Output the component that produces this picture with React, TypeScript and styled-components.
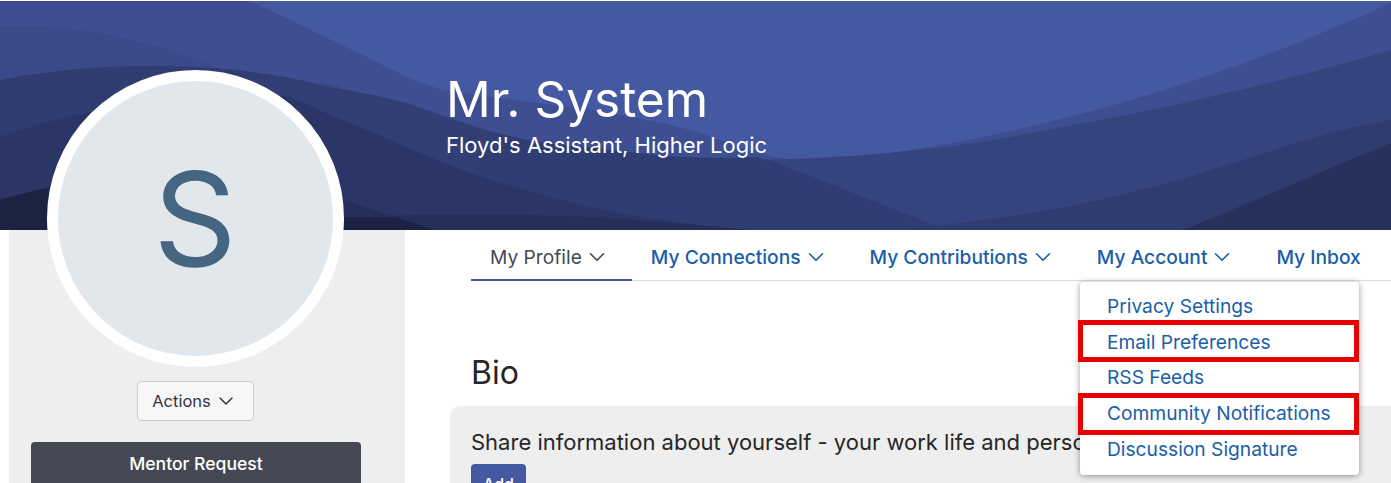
import React from 'react';
import styled, { createGlobalStyle } from 'styled-components';
import { ChevronDown } from 'lucide-react';

const Global = createGlobalStyle`
  html, body { margin: 0; padding: 0; height: 483px; overflow: hidden; background: #fff; }
  body { font-family: Inter, "Liberation Sans", sans-serif; }
  *, *::after { box-sizing: border-box; }
`;

const Banner = styled.header`
  position: relative;
  margin-top: 1px;
  height: 229px;
  padding: 68px 0 0 446px;
  background: #4558a2;
  overflow: hidden;
  color: #fff;
`;
const BannerArt = styled.svg`
  position: absolute;
  inset: 0;
  width: 100%;
  height: 100%;
`;
const Name = styled.h1`
  position: relative;
  margin: 0;
  font-size: 49.5px;
  line-height: 60px;
  font-weight: 400;
`;
const Role = styled.p`
  position: relative;
  margin: 1px 0 0;
  font-size: 22px;
  line-height: 30px;
`;
const Body = styled.div`
  display: flex;
  align-items: flex-start;
  height: 253px;
`;
const Sidebar = styled.aside`
  flex: none;
  display: flex;
  flex-direction: column;
  align-items: center;
  width: 396px;
  height: 100%;
  margin-left: 9px;
  padding: 0 45px 0 21px;
  background: #eeeeee;
`;
const Avatar = styled.div`
  position: relative;
  flex: none;
  display: flex;
  align-items: center;
  justify-content: center;
  width: 297px;
  height: 297px;
  margin-top: -160px;
  border: 11px solid #fff;
  border-radius: 50%;
  background: #e2e7eb;
  color: #446682;
  font-size: 130px;
  font-weight: 400;
`;
const ActionsButton = styled.button`
  flex: none;
  display: flex;
  align-items: center;
  justify-content: center;
  gap: 3px;
  width: 117px;
  height: 40px;
  margin-top: 14px;
  border: 1px solid #cccccc;
  border-radius: 4px;
  background: #f7f7f7;
  color: #33363f;
  font: 400 16.5px Inter, sans-serif;
`;
const MentorButton = styled.button`
  flex: none;
  align-self: flex-start;
  width: 330px;
  height: 44px;
  margin: 21px 0 0 1px;
  padding: 0 0 2px;
  border: 0;
  border-radius: 4px;
  background: #454854;
  color: #fff;
  font: 500 17.6px Inter, sans-serif;
`;
const Main = styled.main`
  flex: 1;
  min-width: 0;
  margin-left: 45px;
`;
const Nav = styled.nav`
  position: relative;
  display: flex;
  height: 51px;
  margin-left: 21px;
  border-bottom: 1px solid #dddddd;
`;
const Tab = styled.a<{ $active?: boolean }>`
  display: flex;
  align-items: center;
  gap: 2px;
  height: 51px;
  padding: 4px 19px 0;
  font-size: 19.2px;
  font-weight: ${(p) => (p.$active ? 400 : 500)};
  white-space: nowrap;
  color: ${(p) => (p.$active ? '#454854' : '#1a5ea8')};
  border-bottom: 2px solid ${(p) => (p.$active ? '#4558a2' : 'transparent')};
`;
const TabChevron = styled(ChevronDown)`
  margin-right: 3px;
`;
const Menu = styled.div`
  position: absolute;
  top: 52px;
  left: 609px;
  z-index: 3;
  width: 279px;
  padding: 6px 0 8px;
  border-radius: 4px;
  background: #fff;
  box-shadow: 0 1px 6px rgba(0, 0, 0, 0.4);
`;
const MenuItem = styled.a<{ $markTop?: number }>`
  position: relative;
  display: flex;
  align-items: center;
  height: 35.8px;
  padding-left: 27px;
  font-size: 19.2px;
  color: #1a5ea8;
  white-space: nowrap;
  ${(p) =>
    p.$markTop !== undefined &&
    `&::after {
      content: '';
      position: absolute;
      top: ${p.$markTop}px;
      left: -2px;
      right: 0;
      height: 42px;
      border: 5px solid #e60000;
    }`}
`;
const Heading = styled.h2`
  margin: 72px 0 0 21px;
  font-size: 32px;
  line-height: 40px;
  font-weight: 400;
  color: #262626;
`;
const Panel = styled.section`
  margin-top: 13px;
  padding: 21px 0 0 21px;
  height: 77px;
  overflow: hidden;
  border-radius: 10px 0 0 0;
  background: #eeeeee;
`;
const PanelText = styled.p`
  margin: 0;
  font-size: 22px;
  line-height: 30px;
  color: #262626;
  white-space: nowrap;
`;
const AddButton = styled.button`
  display: block;
  width: 55px;
  height: 40px;
  margin-top: 7px;
  border: 0;
  border-radius: 4px;
  background: #4558a2;
  color: #fff;
  font: 500 16px Inter, sans-serif;
`;

const tabChevron = <TabChevron size={26} strokeWidth={1.5} />;

export default function App() {
  return (
    <>
      <Global />
      <Banner>
        <BannerArt viewBox="0 1 1391 229" preserveAspectRatio="none" aria-hidden="true">
          <defs>
            <linearGradient id="band" x1="0" x2="1" y1="0" y2="0">
              <stop offset="0" stopColor="#303c70" />
              <stop offset="0.35" stopColor="#323f75" />
              <stop offset="0.55" stopColor="#35447f" />
              <stop offset="1" stopColor="#35447f" />
            </linearGradient>
          </defs>
          <path fill="#3e4e90" d="M248 0C290 20 335 42 373 60C395 72 420 83 443 90C470 95 500 98 530 102C565 107 600 110 630 117C655 121 675 126 697 132C730 142 755 155 800 161C950 155 1180 100 1391 3V230H0V0Z" />
          <path fill="#3a4a89" d="M0 27C70 22 150 40 214 67C250 78 295 83 340 85L340 120H0Z" />
          <path fill="url(#band)" d="M0 80C100 60 230 60 330 87C360 92 390 98 413 105C440 115 470 125 497 133C530 142 565 146 597 148C625 152 650 155 680 157C760 165 930 155 1040 131C1150 112 1270 85 1391 50V230H0Z" />
          <path fill="#303d73" d="M497 133C530 142 565 146 597 148C625 152 650 155 680 157C705 158 735 158 757 157C800 170 880 205 947 230H440Z" />
          <path fill="#2b3666" d="M0 137C70 110 200 90 280 95C300 100 315 108 330 115C355 125 380 135 397 143C420 153 440 162 463 170C495 182 530 192 563 200C600 210 635 216 663 220C690 224 720 228 750 230H0Z" />
          <path fill="#303c70" d="M1391 120C1300 135 1220 172 1140 190C1060 212 970 222 898 230H1391Z" />
          <path fill="#27315c" d="M1391 143C1320 172 1250 203 1182 230H1391Z" />
          <path fill="#252f59" d="M343 217C400 215 470 214 530 215C620 217 690 224 750 230H343Z" />
          <path fill="#252f59" d="M343 200L435 230H343Z" />
          <path fill="#1b2345" d="M343 217L396 217L435 230H343Z" />
          <path fill="#1b2345" d="M0 200C15 195 32 191 60 185V230H0Z" />
        </BannerArt>
        <Name>Mr. System</Name>
        <Role>Floyd's Assistant, Higher Logic</Role>
      </Banner>
      <Body>
        <Sidebar>
          <Avatar>S</Avatar>
          <ActionsButton>
            Actions <ChevronDown size={24} strokeWidth={1.5} />
          </ActionsButton>
          <MentorButton>Mentor Request</MentorButton>
        </Sidebar>
        <Main>
          <Nav>
            <Tab $active>My Profile {tabChevron}</Tab>
            <Tab>My Connections {tabChevron}</Tab>
            <Tab>My Contributions {tabChevron}</Tab>
            <Tab>My Account {tabChevron}</Tab>
            <Tab>My Inbox</Tab>
            <Menu>
              <MenuItem>Privacy Settings</MenuItem>
              <MenuItem $markTop={-4}>Email Preferences</MenuItem>
              <MenuItem>RSS Feeds</MenuItem>
              <MenuItem $markTop={-2}>Community Notifications</MenuItem>
              <MenuItem>Discussion Signature</MenuItem>
            </Menu>
          </Nav>
          <Heading>Bio</Heading>
          <Panel>
            <PanelText>Share information about yourself - your work life and personal interests.</PanelText>
            <AddButton>Add</AddButton>
          </Panel>
        </Main>
      </Body>
    </>
  );
}
